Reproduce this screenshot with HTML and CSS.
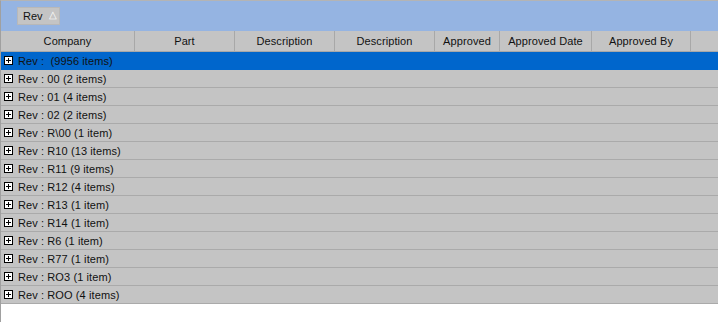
FILE: index.html
```html
<!DOCTYPE html>
<html>
<head>
<title>Grid grouped by Rev</title>
<link rel="stylesheet" href="styles.css">
</head>
<body>
<div class="grid">
  <div class="group-panel">
    <span class="group-chip">Rev <span class="sort-mark">&#9651;</span></span>
  </div>
  <div class="header">
    <div class="col c-company">Company</div>
    <div class="col c-part">Part</div>
    <div class="col c-desc">Description</div>
    <div class="col c-desc">Description</div>
    <div class="col c-appr">Approved</div>
    <div class="col c-date">Approved Date</div>
    <div class="col c-by">Approved By</div>
  </div>
  <div class="rows">
    <div class="row selected"><span class="expand"></span>Rev :&nbsp; (9956 items)</div>
    <div class="row"><span class="expand"></span>Rev : 00 (2 items)</div>
    <div class="row"><span class="expand"></span>Rev : 01 (4 items)</div>
    <div class="row"><span class="expand"></span>Rev : 02 (2 items)</div>
    <div class="row"><span class="expand"></span>Rev : R\00 (1 item)</div>
    <div class="row"><span class="expand"></span>Rev : R10 (13 items)</div>
    <div class="row"><span class="expand"></span>Rev : R11 (9 items)</div>
    <div class="row"><span class="expand"></span>Rev : R12 (4 items)</div>
    <div class="row"><span class="expand"></span>Rev : R13 (1 item)</div>
    <div class="row"><span class="expand"></span>Rev : R14 (1 item)</div>
    <div class="row"><span class="expand"></span>Rev : R6 (1 item)</div>
    <div class="row"><span class="expand"></span>Rev : R77 (1 item)</div>
    <div class="row"><span class="expand"></span>Rev : RO3 (1 item)</div>
    <div class="row"><span class="expand"></span>Rev : ROO (4 items)</div>
  </div>
</div>
</body>
</html>
```
FILE: styles.css
```css
html, body {
 margin: 0;
 padding: 0;
 background-color: #fff;
}

.grid {
 width: 717px;
 height: 321px;
 border-left: 1px solid #a0a0a0;
 border-top: 1px solid #b4b4b4;
 font-family: "Liberation Sans", Arial, sans-serif;
 font-size: 11px;
 color: #000;
}

.group-panel {
 height: 30px;
 background-color: #95b4e2;
 display: flex;
 align-items: flex-start;
 padding: 6px 0 0 16px;
 box-sizing: border-box;
}

.group-chip {
 display: inline-flex;
 align-items: center;
 width: 43px;
 height: 18px;
 padding: 0 0 0 5px;
 background-color: #c4c4c4;
 border: 1px solid #b8b8b8;
 box-sizing: border-box;
 color: #111;
}

.sort-mark {
 color: #fff;
 font-size: 10px;
 margin-left: 6px;
 position: relative;
 top: -2px;
}

.header {
 display: flex;
 height: 21px;
 background-color: #c4c4c4;
 border-bottom: 1px solid #a8a8a8;
 box-sizing: border-box;
}

.col {
 border-right: 1px solid #a8a8a8;
 display: flex;
 align-items: center;
 justify-content: center;
 box-sizing: border-box;
 padding-bottom: 1px;
 color: #111;
 letter-spacing: 0.1px;
}

.c-company { width: 134px; }
.c-part { width: 100px; }
.c-desc { width: 100px; }
.c-appr { width: 65px; }
.c-date { width: 92px; }
.c-by { width: 99px; }

.row {
 height: 18px;
 background-color: #c4c4c4;
 border-bottom: 1px solid #aaaaaa;
 box-sizing: border-box;
 display: flex;
 align-items: center;
 padding-left: 3px;
 color: #111;
 letter-spacing: 0.1px;
}

.row.selected {
 background-color: #0066cc;
 border-bottom-color: #0066cc;
}

.expand {
 width: 9px;
 height: 9px;
 background-color: #fff;
 border: 1px solid #000;
 box-sizing: border-box;
 margin-right: 5px;
 position: relative;
}

.expand::before,
.expand::after {
 content: "";
 position: absolute;
 background-color: #000;
}

.expand::before {
 left: 1px;
 top: 3px;
 width: 5px;
 height: 1px;
}

.expand::after {
 left: 3px;
 top: 1px;
 width: 1px;
 height: 5px;
}
```
